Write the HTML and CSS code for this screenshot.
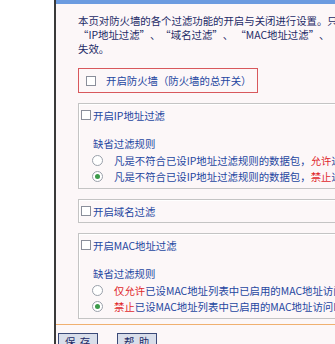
FILE: index.html
```html
<!DOCTYPE html>
<html lang="zh-CN">
<head>
    <meta charset="utf-8">
    <link rel="stylesheet" href="styles.css">
</head>
<body>
    <div class="side"></div>
    <div class="panel">
        <div class="topBar"></div>
        <div class="content">
            <p class="intro">本页对防火墙的各个过滤功能的开启与关闭进行设置。只有防火墙的总开关是开启的时候，后续的<br><span class="qL">“</span>IP地址过滤<span class="qR">”</span>、<span class="qL">“</span>域名过滤<span class="qR">”</span>、 <span class="qL">“</span>MAC地址过滤<span class="qR">”</span>、 <span class="qL">“</span>高级安全设置<span class="qR">”</span>才能够生效，反之，则<br>失效。</p>

            <div class="mainSwitch">
                <label><input type="checkbox" class="chk"><span class="gap"></span>开启防火墙（防火墙的总开关）</label>
            </div>

            <div class="group">
                <label class="head"><input type="checkbox" class="chk">开启IP地址过滤</label>
                <div class="ruleTitle">缺省过滤规则</div>
                <label class="ruleRow"><input type="radio" name="ip" class="rad">凡是不符合已设IP地址过滤规则的数据包，<em>允许</em>通过本路由器</label>
                <label class="ruleRow"><input type="radio" name="ip" class="rad" checked>凡是不符合已设IP地址过滤规则的数据包，<em>禁止</em>通过本路由器</label>
            </div>

            <div class="group">
                <label class="head"><input type="checkbox" class="chk">开启域名过滤</label>
            </div>

            <div class="group">
                <label class="head"><input type="checkbox" class="chk">开启MAC地址过滤</label>
                <div class="ruleTitle">缺省过滤规则</div>
                <label class="ruleRow"><input type="radio" name="mac" class="rad"><em>仅允许</em>已设MAC地址列表中已启用的MAC地址访问Internet</label>
                <label class="ruleRow"><input type="radio" name="mac" class="rad" checked><em>禁止</em>已设MAC地址列表中已启用的MAC地址访问Internet</label>
            </div>
        </div>
        <div class="footer">
            <button class="btn">保 存</button>
            <button class="btn">帮 助</button>
        </div>
    </div>
</body>
</html>
```

FILE: styles.css
```css
html, body {
    margin: 0;
    height: 100%;
    overflow: hidden;
}
body {
    display: flex;
    background: #fff;
    font-family: "Noto Sans CJK SC", "Liberation Sans", sans-serif;
    font-size: 10.4px;
    color: #1c2a66;
}
.side {
    width: 54px;
    flex: none;
}
.panel {
    width: 600px;
    flex: none;
    border-left: 2px solid #3a3a3a;
    background: #fcf7f8;
}
.topBar {
    height: 4px;
    background: #6b9be0;
}
.content {
    padding: 10px 0 0 22px;
}
.intro {
    margin: 0;
    line-height: 14px;
    white-space: nowrap;
}
.qL, .qR {
    display: inline-block;
    width: 1em;
}
.qL {
    text-align: right;
}
.qR {
    text-align: left;
}
.mainSwitch {
    margin-top: 12px;
    width: 171px;
    height: 23px;
    border: 1px solid #d8585c;
    display: flex;
    align-items: center;
    padding-left: 7px;
    color: #2546a0;
}
.mainSwitch label {
    display: flex;
    align-items: center;
}
.gap {
    width: 8px;
}
.chk {
    appearance: none;
    width: 10px;
    height: 10px;
    margin: 0 2px 0 0;
    border: 1px solid #8a8e9a;
    background: #fff;
    flex: none;
}
.group {
    margin-top: 10px;
    border: 1px solid #c4c4c4;
    box-shadow: inset 1px 1px 0 #fff;
    padding: 0 0 0 2px;
}
.group .ruleRow:last-child {
    margin-bottom: 4px;
}
.head {
    display: flex;
    align-items: center;
    height: 22px;
    color: #2546a0;
}
.ruleTitle {
    margin: 10px 0 0 12px;
    line-height: 16px;
    color: #2546a0;
}
.ruleRow {
    display: flex;
    align-items: center;
    height: 16px;
    padding-left: 11px;
    color: #2546a0;
    white-space: nowrap;
}
.ruleRow em {
    font-style: normal;
    color: #e0282c;
}
.rad {
    appearance: none;
    width: 11px;
    height: 11px;
    margin: 0 11px 0 0;
    border: 1px solid #9aa0aa;
    border-radius: 50%;
    background: #fff;
    flex: none;
    display: grid;
    place-items: center;
}
.rad:checked::after {
    content: "";
    width: 5px;
    height: 5px;
    border-radius: 50%;
    background: #3c9a4a;
}
.footer {
    margin-top: 5px;
    border-top: 1px solid #f0b070;
    padding: 8px 0 0 2px;
    display: flex;
    gap: 19px;
}
.btn {
    font-family: inherit;
    font-size: 10.4px;
    color: #1c2a66;
    background: #d9deea;
    border: 1px solid #3b4a78;
    padding: 1px 6px;
    line-height: 14px;
    letter-spacing: 1px;
}
```
